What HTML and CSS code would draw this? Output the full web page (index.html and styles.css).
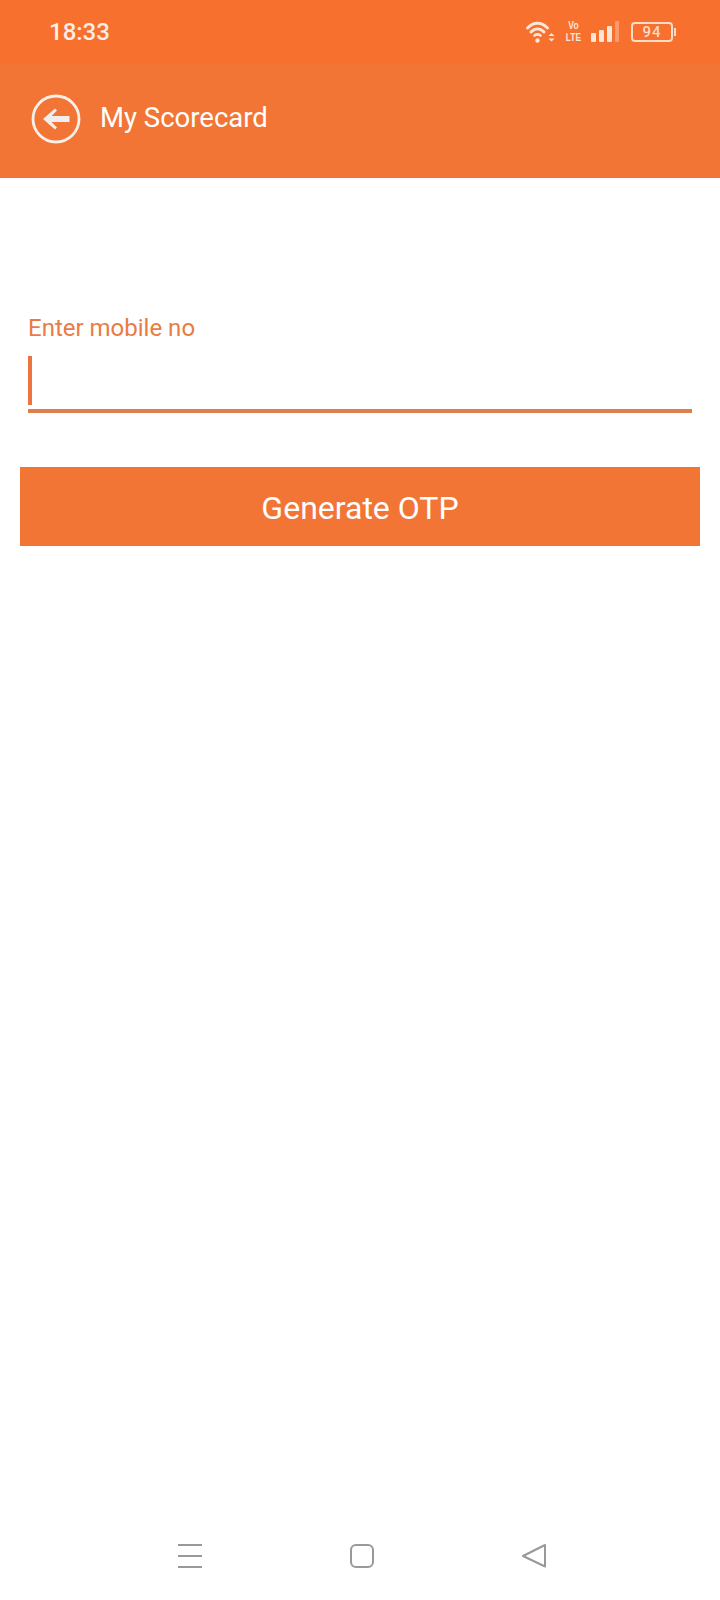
FILE: index.html
```html
<!DOCTYPE html>
<html lang="en">
<head>
<meta charset="utf-8">
<title>My Scorecard</title>
<link rel="stylesheet" href="styles.css">
</head>
<body>
<div class="screen">
  <div class="statusbar">
    <span class="time">18:33</span>
    <div class="status-icons">
      <svg class="ic-wifi" width="30" height="24" viewBox="0 0 30 24" fill="none" stroke="#fbe6d8" stroke-linecap="round">
        <path d="M1.500 8C7.500 1.500 15.500 1.500 21.500 8" stroke-width="3"/>
        <path d="M5 12C9 8 14 8 18 12" stroke-width="3"/>
        <path d="M8.500 15.500C10.500 14 12.500 14 14.500 15.500" stroke-width="2.600"/>
        <circle cx="11.500" cy="20.500" r="2.200" fill="#fbe6d8" stroke="none"/>
        <path d="M22.500 16L25.500 13L28.500 16ZM22.500 18.500L25.500 21.500L28.500 18.500Z" fill="#fbe6d8" stroke="none"/>
      </svg>
      <div class="volte"><span>Vo</span><span>LTE</span></div>
      <div class="signal">
        <i class="bar b1"></i><i class="bar b2"></i><i class="bar b3"></i><i class="bar b4"></i>
      </div>
      <div class="battery">
        <div class="batt-body">94</div>
        <div class="batt-tip"></div>
      </div>
    </div>
  </div>
  <header class="appbar">
    <svg class="back" width="50" height="50" viewBox="0 0 50 50" fill="none">
      <circle cx="25" cy="25" r="23" stroke="#f8efe9" stroke-width="2.800"/>
      <path d="M12 25L24 14.500L26 16.500L20.500 22H38.500V28H20.500L26 33.500L24 35.500Z" fill="#f3eeee"/>
    </svg>
    <h1 class="title">My Scorecard</h1>
  </header>
  <main class="content">
    <div class="field">
      <label class="label">Enter mobile no</label>
      <div class="input"><span class="caret"></span></div>
    </div>
    <button class="btn" type="button">Generate OTP</button>
  </main>
  <nav class="navbar">
    <svg width="26" height="26" viewBox="0 0 26 26" fill="none" stroke="#999" stroke-width="2">
      <path d="M1 2H25M1 13H25M1 24H25"/>
    </svg>
    <svg width="26" height="26" viewBox="0 0 26 26" fill="none" stroke="#999" stroke-width="2">
      <rect x="2" y="2" width="22" height="22" rx="5"/>
    </svg>
    <svg width="26" height="26" viewBox="0 0 26 26" fill="none" stroke="#999" stroke-width="2" stroke-linejoin="round">
      <path d="M24 2V23.500L2 13Z"/>
    </svg>
  </nav>
</div>
</body>
</html>
```
FILE: styles.css
```css
html, body {
  margin: 0;
  padding: 0;
  background: #fff;
}
.screen {
  width: 720px;
  height: 1600px;
  display: flex;
  flex-direction: column;
  font-family: Roboto, "Liberation Sans", sans-serif;
  overflow: hidden;
}
.statusbar {
  height: 64px;
  flex: none;
  background: #f7702e;
  display: flex;
  align-items: center;
  justify-content: space-between;
  padding: 0 44px 0 49px;
  box-sizing: border-box;
}
.time {
  font-size: 24px;
  font-weight: 500;
  color: #fbeee6;
}
.status-icons {
  display: flex;
  align-items: center;
  margin-top: -1px;
}
.volte {
  display: flex;
  flex-direction: column;
  align-items: center;
  width: 15px;
  margin-left: 10px;
  font-family: "Liberation Sans", sans-serif;
  font-size: 10px;
  font-weight: 700;
  line-height: 11.500px;
  transform: scaleX(0.85);
  color: #fbe6d8;
}
.signal {
  display: flex;
  align-items: flex-end;
  gap: 3px;
  height: 21px;
  margin-left: 10px;
}
.bar {
  display: block;
  width: 5px;
  background: #fbe6d8;
  border-radius: 1px;
}
.b1 { height: 9px; }
.b2 { height: 12px; }
.b3 { height: 16px; }
.b4 { height: 21px; width: 4px; background: #fb9a6b; }
.battery {
  display: flex;
  align-items: center;
  margin-left: 12px;
}
.batt-body {
  width: 42px;
  height: 20px;
  box-sizing: border-box;
  border: 2px solid #fbdcc8;
  border-radius: 4px;
  font-size: 15px;
  font-weight: 500;
  line-height: 16px;
  text-align: center;
  color: #fbdcc8;
  letter-spacing: 1px;
}
.batt-tip {
  width: 2px;
  height: 8px;
  margin-left: 1px;
  background: #fbdcc8;
}
.appbar {
  height: 114px;
  flex: none;
  background: #f27536;
  display: flex;
  align-items: center;
  padding: 0 0 4px 31px;
  box-sizing: border-box;
}
.back {
  flex: none;
}
.title {
  margin: 0 0 4px 19px;
  font-size: 27.500px;
  font-weight: 400;
  color: #fff;
}
.content {
  flex: 1;
  padding: 137px 20px 0;
}
.field {
  padding: 0 8px;
}
.label {
  display: block;
  font-size: 24px;
  line-height: 26px;
  color: #e97b45;
}
.input {
  height: 53px;
  margin-top: 15px;
  border-bottom: 4px solid #dd7f4c;
}
.caret {
  display: block;
  width: 4px;
  height: 49px;
  background: #ec7440;
}
.btn {
  display: block;
  width: 680px;
  height: 79px;
  margin-top: 54px;
  border: 0;
  padding: 2px 0 0;
  background: #f27536;
  color: #fff;
  font-family: inherit;
  font-size: 32px;
  font-weight: 400;
}
.navbar {
  flex: none;
  height: 57px;
  display: flex;
  justify-content: center;
  gap: 146px;
  padding-left: 4px;
  box-sizing: border-box;
}
```
